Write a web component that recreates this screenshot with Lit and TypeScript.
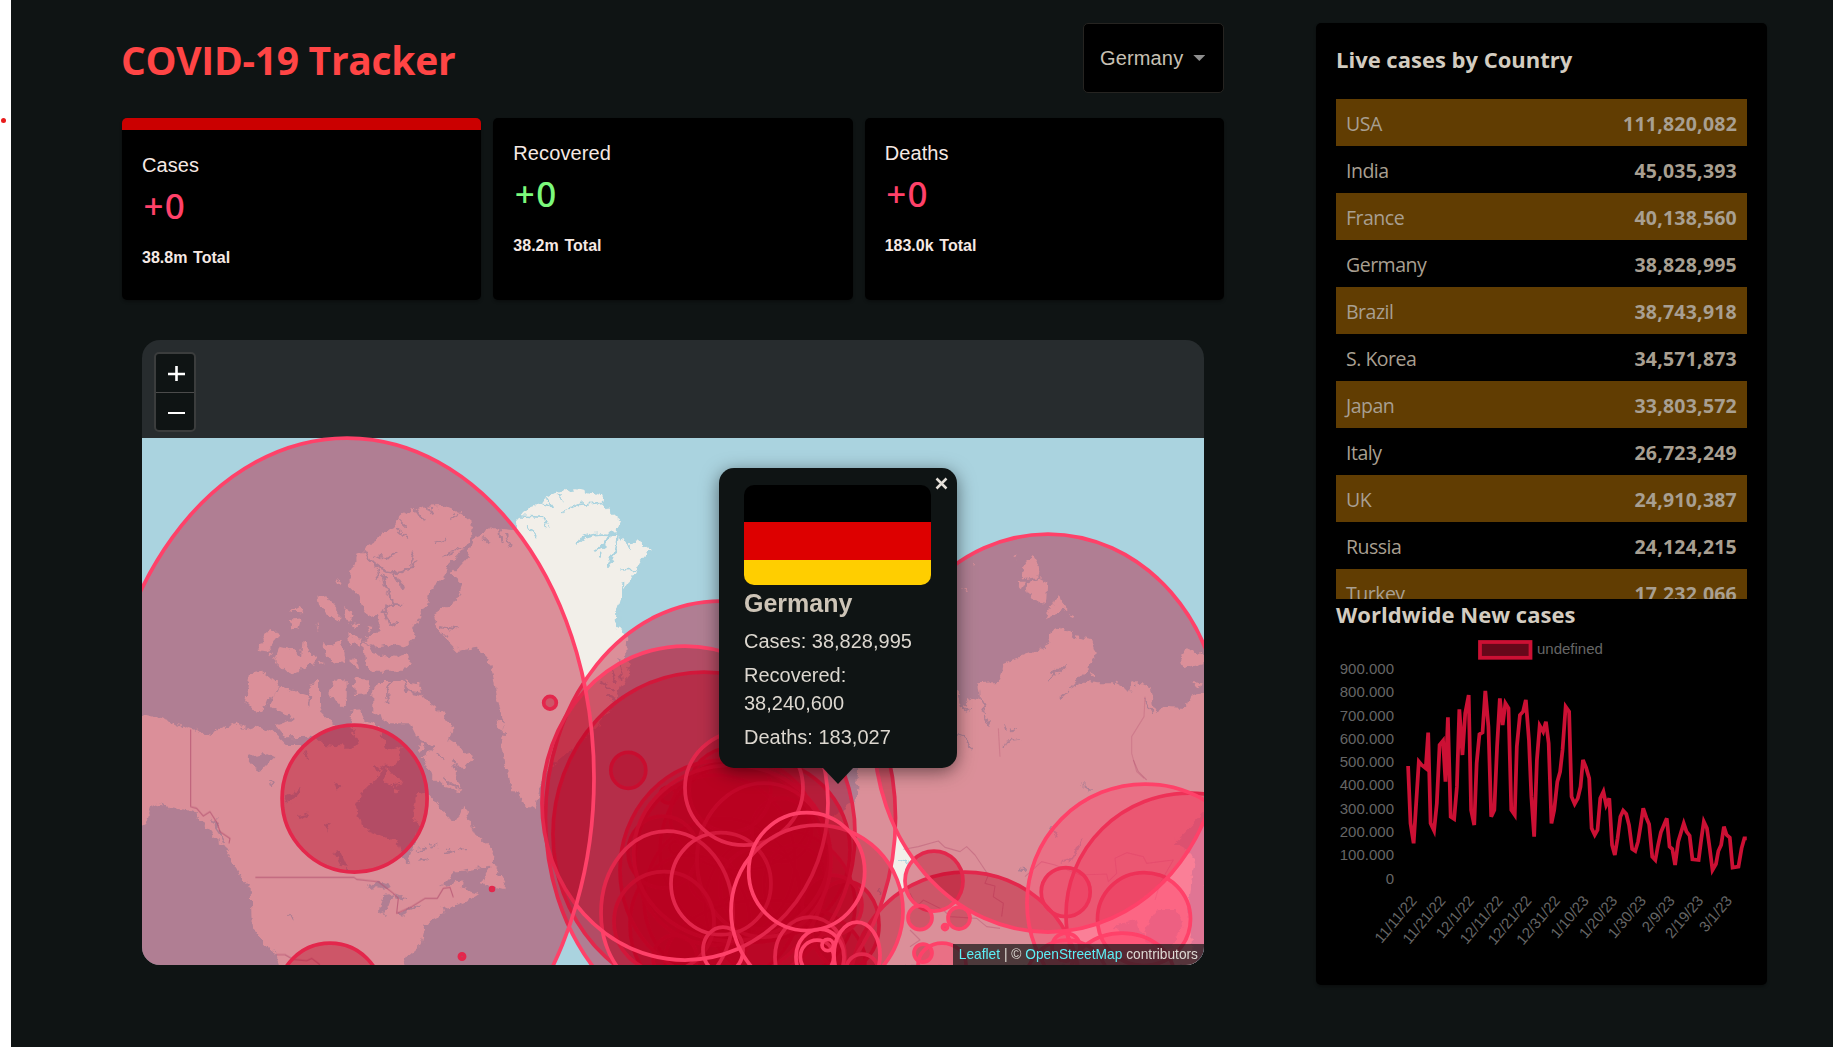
import { LitElement, html, svg, css } from "lit";
import { customElement, property } from "lit/decorators.js";
import { classMap } from "lit/directives/class-map.js";

const DARK = "#b80020";
const LINE = "#ff4169";

@customElement("info-box")
class InfoBox extends LitElement {
  @property() label = "";
  @property() delta = "";
  @property() total = "";
  @property({ type: Boolean }) active = false;
  @property({ type: Boolean }) good = false;

  static styles = css`
    :host { display: flex; flex: 1; min-width: 0; }
    .card { flex: 1; background: #000; border-radius: 5px; padding: 20px; box-sizing: border-box; box-shadow: 0 2px 3px rgba(0,0,0,.3); font-family: "Liberation Sans", Arial, sans-serif; color: #f6e9e4; overflow: hidden; }
    .active { border-top: 12px solid #cb0000; }
    .label { font-size: 20px; line-height: 30px; margin-top: -.5px; letter-spacing: .1px; }
    .delta { font-family: "Noto Sans", "Open Sans", sans-serif; font-weight: 500; font-size: 35px; line-height: 44px; margin: 4px 0 0 1.5px; letter-spacing: 1.3px; color: #ff4169; }
    .good { color: #7cf97c; }
    .total { font-weight: bold; font-size: 16px; line-height: 20px; margin-top: 20.5px; word-spacing: 1.3px; }
  `;
  render() {
    return html`<div class=${classMap({ card: true, active: this.active })}>
      <div class="label">${this.label}</div>
      <div class=${classMap({ delta: true, good: this.good })}>${this.delta}</div>
      <div class="total">${this.total}</div>
    </div>`;
  }
}

type E = [number, number, number, number, string?];

const circles: E[] = [
  [354.6, 798.5, 72.5, 73.5], [330, 995, 52, 52], [462, 956.5, 2.6, 2.6], [492, 889, 1.4, 1.4],
  [550, 702.7, 6.3, 6.3], [668, 795, 8, 8], [675.7, 847.7, 6, 6], [628.3, 770.3, 17.5, 18],
  [755, 850, 95, 92], [722, 900, 78, 82], [780, 905, 75, 75], [740, 815, 70, 55], [690, 925, 60, 70], [765, 960, 100, 60], [715, 860, 80, 85],
  [663, 852, 35, 36], [713, 880, 23, 23], [781.7, 830, 30, 32], [675, 958, 22, 23],
  [730, 790, 41, 42], [760, 888, 40, 41], [795, 885, 31, 40], [845, 925, 34, 44], [832, 905, 30, 30],
  [723, 870, 103, 110], [731.7, 853, 98, 88], [764, 860, 67, 77], [704, 834, 151, 162],
  [664, 921.7, 50, 50],
  [965, 988, 115, 116], [720.5, 818, 175, 217],
  [810, 957, 35, 40], [667, 913, 66, 82], [721, 883.7, 50, 51], [723, 950, 20, 23],
  [744, 788, 59, 57],
  [923, 953, 9, 9], [934, 881, 29, 30],
  [1144, 919, 46.5, 46.5, LINE], [1065.7, 892, 24.5, 24.5, LINE], [1066, 947, 14, 14, LINE],
  [1190, 915, 124, 122, LINE],
  [685, 803, 143, 157], [817, 911, 86, 86],
  [820, 957, 24, 28], [817, 957, 16.7, 17], [827.7, 945, 5.7, 5.7], [862, 970, 16, 16], [857, 955, 23, 33],
  [1048, 733, 174, 199],
  [920, 917.7, 12, 12], [959, 918, 11, 11], [945, 927, 2.5, 2.5],
  [942, 965, 24, 22, LINE], [1145, 903, 118, 119, LINE],
  [1067, 985, 42, 45, LINE], [1122, 975, 52, 42, LINE],
  [347, 778, 247, 340], [806.7, 871.5, 58, 59],
];

const arctic = [
  "380,190 400,190 412,165 440,150 470,125 490,110 510,75 575,50 640,48 690,68 733,105 725,140 700,175 665,215 640,260 600,300 590,345 560,395 545,425 555,445 530,470 490,462 430,470 400,455 425,435 455,425 450,395 440,375 420,382 395,345 385,315 360,290 358,250 375,215",
  "395,455 420,470 430,490 490,500 530,490 540,515 520,545 440,545 405,530",
  "60,550 95,545 155,590 115,625 105,650 75,668 45,635",
  "158,590 190,605 240,620 236,585 270,575 270,640 275,670 320,705 250,740 165,742 135,705 190,690 120,650 130,615",
  "430,600 450,573 520,573 570,585 580,625 640,670 670,720 660,750 730,800 700,840 665,820 697,905 640,890 600,850 575,800 615,775 560,740 540,700 480,700 430,665",
  "370,565 420,565 410,610 375,612", "295,600 320,570 350,565 350,640 335,658 310,630",
  "135,510 150,470 190,480 210,500 215,450 230,455 235,490 260,495 250,525 175,548",
  "80,480 120,420 150,430 110,485", "275,460 300,465 335,450 345,520 315,522 290,490",
  "360,510 380,500 388,535", "180,368 210,350 217,370", "180,390 215,385 205,415 185,415",
  "262,320 285,315 325,360 325,395 290,375 268,345", "340,350 370,370 360,395 345,385",
  "360,400 390,402 375,414", "355,435 395,445 385,468 360,455", "413,408 427,412 418,428",
  "318,268 333,275 330,290", "255,400 263,408 273,430", "118,485 132,490 122,500", "565,760 585,765 575,782 563,775",
  "800,690 825,700 820,725 805,715", "265,515 280,518 270,524",
];

const america =
  "0,195 36,195 100,210 180,235 235,255 260,240 320,215 345,240 375,230 430,245 470,285 520,285 560,262 585,285 640,290 690,290 660,215 665,180 690,178 708,215 745,225 770,300 815,290 800,340 765,345 740,385 700,420 678,470 700,535 760,560 805,575 815,625 835,640 845,600 865,540 850,490 860,430 890,425 930,470 960,510 985,500 998,470 1035,550 1092,600 1088,640 1122,700 1120,718 1055,700 1082,650 975,665 930,712 1000,690 995,715 1045,730 990,765 935,775 940,795 890,820 875,880 830,920 815,960 457,960 440,912 400,880 365,820 362,720 320,655 285,590 250,560 200,490 120,475 70,460 50,520 0,545";

const greenland =
  "165,320 220,295 280,300 300,255 360,215 400,190 470,178 540,195 555,230 603,270 590,300 622,345 650,333 692,360 660,395 630,450 608,480 590,540 585,590 620,610 615,680 630,720 580,830 500,920 390,1010 370,1050 345,1140 320,1125 280,1080 260,1020 247,950 255,880 232,810 215,710 200,680 170,650 110,660 60,610 40,555 110,510 130,460 95,430 140,380";

const russia = [
  "-180,580 0,600 51,575 65,630 90,590 120,600 115,550 180,545 190,490 290,450 330,430 340,390 370,375 400,410 455,420 470,465 440,510 385,570 430,545 470,550 520,550 570,575 575,545 630,560 640,620 655,645 675,620 740,625 750,590 810,580 810,1400 -700,1400 -640,1150 -400,1000 -250,900 -240,700",
  "275,162 300,200 295,232 245,238 250,195", "260,250 300,235 322,245 318,312 280,300 262,270",
  "350,282 380,325 340,345 318,358", "218,170 232,168 230,178", "97,190 110,190 105,197",
  "230,245 255,245 245,262", "68,267 82,274 76,276", "720,465 740,445 790,465 790,490 730,505",
  "757,545 785,550 780,562", "450,515 465,520 458,530", "390,342 405,350 396,354",
];

const line = (d: string, w: number) => svg`<path d=${d} fill="none" stroke="#aad3df" stroke-width=${w} stroke-linecap="round" stroke-linejoin="round"/>`;
const border = (d: string) => svg`<path d=${d} fill="none" stroke="#b18ba8" stroke-opacity=".75" stroke-width="3.4" stroke-linejoin="round"/>`;
const poly = (p: string) => svg`<polygon points=${p} fill="#f2efe9"/>`;
const lake = (p: string) => svg`<polygon points=${p} fill="#aad3df"/>`;

@customElement("case-map")
class CaseMap extends LitElement {
  static styles = css`
    :host { display: block; position: relative; height: 625px; border-radius: 18px; overflow: hidden; background: #272c2e; font-family: "Liberation Sans", Arial, sans-serif; }
    .canvas { display: block; width: 1062px; height: 625px; }
    .zoom { position: absolute; left: 12px; top: 12px; width: 38px; border: 2px solid #3b3d3d; border-radius: 5px; background: #0f1414; }
    .zoom svg { display: block; width: 38px; height: 38px; }
    .zoom svg + svg { border-top: 1px solid #4b4b4b; height: 37px; }
    .popup { position: absolute; left: 577px; top: 128px; width: 238px; height: 300px; box-sizing: border-box; padding: 17px 26px 0 25px; border-radius: 15px; background: #0f1414; box-shadow: 0 4px 18px rgba(0,0,0,.5); color: #dcd7cf; }
    .tip { position: absolute; left: 103px; top: 299px; width: 32px; height: 17px; background: #0f1414; clip-path: polygon(0 0, 100% 0, 50% 100%); }
    .close { position: absolute; right: 9px; top: 9px; width: 13px; height: 13px; }
    .flag { width: 187px; height: 100px; border-radius: 10px; background: linear-gradient(#000 37.4px, #d00 37.4px 75px, #ffce00 75px); }
    .name { font-size: 25px; font-weight: bold; line-height: 30px; margin: 3px 0 8.5px; color: #cdc4b7; }
    .stat { font-size: 20px; line-height: 28px; margin-top: 6px; }
    .credit { position: absolute; right: 0; bottom: 0; height: 21px; line-height: 22px; padding: 0 6px; font-size: 13.75px; white-space: nowrap; background: rgba(15,20,20,.7); color: #dedad4; }
    .credit span { color: #5cf0f7; }
  `;
  render() {
    return html`
      <svg class="canvas" viewBox="142 340 1062 625">
        <defs>
          <filter id="coast" x="-5%" y="-5%" width="110%" height="110%">
            <feTurbulence type="fractalNoise" baseFrequency=".13" numOctaves="3" seed="4"/>
            <feDisplacementMap in="SourceGraphic" scale="9" xChannelSelector="R" yChannelSelector="G"/>
          </filter>
        </defs>
        <rect x="142" y="438" width="1062" height="527" fill="#aad3df"/>
        <g filter="url(#coast)">
          <g transform="translate(130 650) scale(.33333)">
            ${poly(america)}
            ${lake("350,325 400,310 430,325 395,362 370,350")}
            ${lake("705,715 740,690 780,705 775,718 740,712")}
            ${lake("760,735 790,730 765,795 750,785")}${lake("795,730 830,745 820,755 805,745")}
            ${lake("800,790 870,760 870,768 810,797")}${lake("610,605 630,600 655,655 635,650")}
            ${lake("462,440 520,415 500,440 470,458")}${lake("500,498 540,490 510,508")}
            ${lake("585,515 600,520 590,545")}${lake("610,395 635,410 620,425")}${lake("730,345 755,360 740,365")}
            ${poly("770,350 800,385 825,400 790,405 765,395")}${poly("795,410 810,415 800,430")}
            ${line("M860 600l25-5M900 590l20-5M945 610l30-8M990 595l15 0M870 630l15-4M420 400l10 6M480 797l8 8M525 300l12 25M240 500l40 60M255 510l30 70", 5)}
          </g>
          <g transform="translate(230 490) scale(.33333)">
            ${arctic.map(poly)}
            ${line("M405 190Q430 240 490 248Q545 240 560 215M490 250L520 295M440 245L445 265M460 255L465 290L490 340L455 365M490 340L510 342M465 370L480 410L500 400", 8)}
            ${line("M612 158L650 145M640 200L700 172M430 195L470 205L500 190M505 85L530 110M500 115L535 145M560 60L580 92M470 210L490 190M540 225L548 190M660 85L685 68M595 50L605 72", 5)}
            ${line("M725 150L735 210M705 180L725 210", 8)}
            ${line("M480 575Q460 610 475 640M520 575L535 605L575 612M120 650L190 690M240 620L238 645M620 790L640 810M670 810L700 845M640 870L690 895M360 585L350 640", 7)}
          </g>
          <g transform="translate(420 430) scale(.33333)">
            ${poly(greenland)}
            ${line("M470 340Q500 305 565 312L600 310M565 312Q565 350 525 358M600 310Q590 370 567 410", 8)}
            ${line("M300 258L370 262L382 290M430 245L480 220L545 215M320 285L345 320M380 205L400 235M360 215L395 232M410 195L425 208M605 315L630 355M600 420L645 418M535 380L545 370", 5)}
            ${line("M240 300L245 340M258 315L270 350M190 325L205 340M610 460L600 590M60 588L110 595M55 610L85 620M545 760l40 20M570 720l20 40M560 800l25 10M595 690l10 60", 6)}
          </g>
          <g transform="translate(940 500) scale(.33333)">
            ${russia.map(poly)}
            ${line("M120 600Q145 630 135 655L150 680M60 705Q80 710 80 730L92 745M330 510L350 520L375 495M330 535L345 515M65 590L70 625L90 635", 6)}
            ${line("M360 598L385 575M190 745L200 725L235 720M190 675L195 690M215 688L228 686M435 852L445 875M615 600L640 640", 5)}
          </g>
          <g transform="translate(860 760) scale(.33333)">
            ${lake("940,250 1040,150 1040,620 1000,600 985,420 1005,300 970,265")}
            ${lake("760,500 830,480 850,530 780,520")}${lake("850,510 890,450 950,450 970,500 930,570 860,550")}
            ${line("M605 305L640 298L665 240M670 75L690 90M480 328L490 330M55 390L55 405M120 300L140 305M575 205L590 230", 6)}
          </g>
        </g>
        <g transform="translate(130 650) scale(.33333)">
          ${border("M182 238V470L200 475L220 498L240 485L262 520L270 545L300 565L297 580M376 682H672L680 688L745 695L790 730L805 745L800 790L845 770L885 745H922L940 715L960 712L970 742M440 914L465 914L490 928L530 932L545 925L570 944")}
        </g>
        <g transform="translate(860 760) scale(.33333)" opacity=".6">
          ${border("M130 268L175 260L235 243L255 262L300 275L320 260L345 285L385 345L375 370L405 378L400 410L430 430L425 470M495 350L545 305L585 315L660 345L740 342L745 365L770 340L765 295L800 278L850 290L860 310L940 300L900 370L885 420M150 400L170 440L190 420L250 450L270 470L350 475L380 500L420 505M150 510L180 540L150 560M820 0L835 35L860 60")}
        </g>
        <g transform="translate(940 500) scale(.33333)" opacity=".45">
          ${border("M615 590L612 650L575 710L575 760L590 815L612 835M175 685L180 770")}
        </g>
        ${circles.map((c) => svg`<ellipse cx=${c[0]} cy=${c[1]} rx=${c[2]} ry=${c[3]} fill=${c[4] ?? DARK} fill-opacity=".4" stroke=${LINE} stroke-width="3.75"/>`)}
      </svg>
      <div class="zoom">
        <svg viewBox="0 0 38 38"><path d="M12 20H29M20.5 12V27" stroke="#fff" stroke-width="2.6"/></svg>
        <svg viewBox="0 0 38 37"><path d="M12 20H29" stroke="#fff" stroke-width="2"/></svg>
      </div>
      <div class="popup">
        <div class="flag"></div>
        <div class="name">Germany</div>
        <div class="stat">Cases: 38,828,995</div>
        <div class="stat">Recovered: 38,240,600</div>
        <div class="stat">Deaths: 183,027</div>
        <svg class="close" viewBox="0 0 13 13"><path d="M1.5 1.5L11.5 11.5M11.5 1.5L1.5 11.5" stroke="#e4dfd8" stroke-width="2.5"/></svg>
        <div class="tip"></div>
      </div>
      <div class="credit"><span>Leaflet</span> | © <span>OpenStreetMap</span> contributors</div>
    `;
  }
}

const series =
  "341,558 348,730 357,790 372,545 380,555 392,565 399,458 406,730 416,752 424,670 432,495 442,482 449,605 456,412 464,710 474,717 482,620 489,388 498,525 506,400 516,345 523,690 532,735 539,550 547,463 556,457 564,333 573,440 581,710 590,690 598,500 606,355 614,435 622,370 631,385 639,690 649,705 655,500 664,405 673,395 681,360 690,480 697,650 705,770 713,540 721,437 731,455 739,425 747,490 755,730 763,690 772,605 780,575 787,510 796,380 806,395 813,650 822,672 831,655 839,620 846,540 855,563 864,595 871,745 880,765 888,750 896,655 905,635 913,675 922,655 930,795 938,825 946,775 954,710 962,692 971,702 979,735 988,807 997,813 1005,785 1012,740 1020,685 1029,713 1037,733 1046,830 1055,840 1063,795 1071,757 1088,715 1096,800 1104,807 1112,855 1121,785 1137,730 1145,755 1154,767 1162,838 1180,840 1188,775 1195,725 1204,745 1212,805 1220,870 1230,852 1237,813 1245,795 1253,740 1261,765 1270,773 1278,863 1295,860 1304,805 1312,775 1319,775";
const dates = ["11/11/22", "11/21/22", "12/1/22", "12/11/22", "12/21/22", "12/31/22", "1/10/23", "1/20/23", "1/30/23", "2/9/23", "2/19/23", "3/1/23"];

@customElement("line-graph")
class LineGraph extends LitElement {
  static styles = css`
    :host { display: block; }
    svg { display: block; width: 411px; height: 335px; overflow: visible; }
    text { font-family: "Liberation Sans", Arial, sans-serif; font-size: 15px; fill: #666; }
  `;
  render() {
    return html`<svg viewBox="1336 630 411 335">
      <rect x="1480" y="642" width="50.5" height="15.8" fill="#66081a" stroke="#cc1034" stroke-width="3.75"/>
      <text x="1537" y="654">undefined</text>
      ${[9, 8, 7, 6, 5, 4, 3, 2, 1, 0].map((n) => svg`<text x="1394" y=${883.6 - n * 23.3} text-anchor="end">${n ? n + "00.000" : "0"}</text>`)}
      <g transform="translate(1290 580) scale(.3463 .33333)">
        <polyline points=${series} fill="none" stroke="#cc1034" stroke-width="3.75" vector-effect="non-scaling-stroke" stroke-miterlimit="4"/>
      </g>
      ${dates.map((d, i) => svg`<text transform="translate(${1417.6 + i * 28.66} 901) rotate(-50)" text-anchor="end">${d}</text>`)}
    </svg>`;
  }
}

const countries: [string, string][] = [
  ["USA", "111,820,082"], ["India", "45,035,393"], ["France", "40,138,560"], ["Germany", "38,828,995"],
  ["Brazil", "38,743,918"], ["S. Korea", "34,571,873"], ["Japan", "33,803,572"], ["Italy", "26,723,249"],
  ["UK", "24,910,387"], ["Russia", "24,124,215"], ["Turkey", "17,232,066"],
];

@customElement("app-root")
class AppRoot extends LitElement {
  static styles = css`
    :host { display: flex; width: 1833px; height: 1047px; overflow: hidden; background: #0f1414; }
    .edge { width: 11px; background: #fff; box-sizing: border-box; padding: 118px 0 0 1px; }
    .dot { width: 5px; height: 5px; border-radius: 50%; background: #e81c1c; }
    .left { width: 1102px; margin: 23px 92px 0 111px; }
    .head { display: flex; justify-content: space-between; height: 95px; }
    .title { margin: 0 0 0 -1px; font: bold 39px/54px "Open Sans", "Noto Sans", sans-serif; color: #ff4545; padding-top: 10px; white-space: nowrap; letter-spacing: -.3px; }
    .select { display: flex; align-items: center; gap: 10px; box-sizing: border-box; width: 141px; height: 70px; padding: 0 0 0 16px; border: 1px solid #262421; border-radius: 5px; background: #000; color: #c8c1b4; font: 20px "Liberation Sans", Arial, sans-serif; letter-spacing: .15px; }
    .arrow { width: 12px; height: 6px; background: #8e8e8e; clip-path: polygon(0 0, 100% 0, 50% 100%); }
    .stats { display: flex; gap: 12px; height: 182px; }
    case-map { margin: 40px 20px 0; }
    .side { width: 451px; height: 962px; margin-top: 23px; box-sizing: border-box; padding: 0 20px; background: #000; border-radius: 5px; box-shadow: 0 2px 3px rgba(0,0,0,.3); font-family: "Open Sans", "Noto Sans", sans-serif; }
    .heading { margin: 0; font-size: 22px; font-weight: bold; line-height: 30px; color: #d3ccc0; white-space: nowrap; }
    .first { padding: 21px 0 25px; }
    .table { height: 500px; overflow: hidden; }
    .row { display: flex; justify-content: space-between; align-items: center; box-sizing: border-box; height: 47px; padding: 2px 10px 0; font-size: 19.5px; color: #a89f91; }
    .row:nth-child(odd) { background: #613d02; }
    .country { letter-spacing: -.5px; }
    .count { font-weight: bold; letter-spacing: .22px; }
    .second { letter-spacing: .05px; }
    line-graph { margin-top: 1px; }
  `;
  render() {
    return html`
      <div class="edge"><div class="dot"></div></div>
      <div class="left">
        <div class="head">
          <h1 class="title">COVID-19 Tracker</h1>
          <div class="select"><span>Germany</span><span class="arrow"></span></div>
        </div>
        <div class="stats">
          <info-box label="Cases" delta="+0" total="38.8m Total" active></info-box>
          <info-box label="Recovered" delta="+0" total="38.2m Total" good></info-box>
          <info-box label="Deaths" delta="+0" total="183.0k Total"></info-box>
        </div>
        <case-map></case-map>
      </div>
      <div class="side">
        <h3 class="heading first">Live cases by Country</h3>
        <div class="table">
          ${countries.map(([n, c]) => html`<div class="row"><span class="country">${n}</span><span class="count">${c}</span></div>`)}
        </div>
        <h3 class="heading second">Worldwide New cases</h3>
        <line-graph></line-graph>
      </div>
    `;
  }
}
